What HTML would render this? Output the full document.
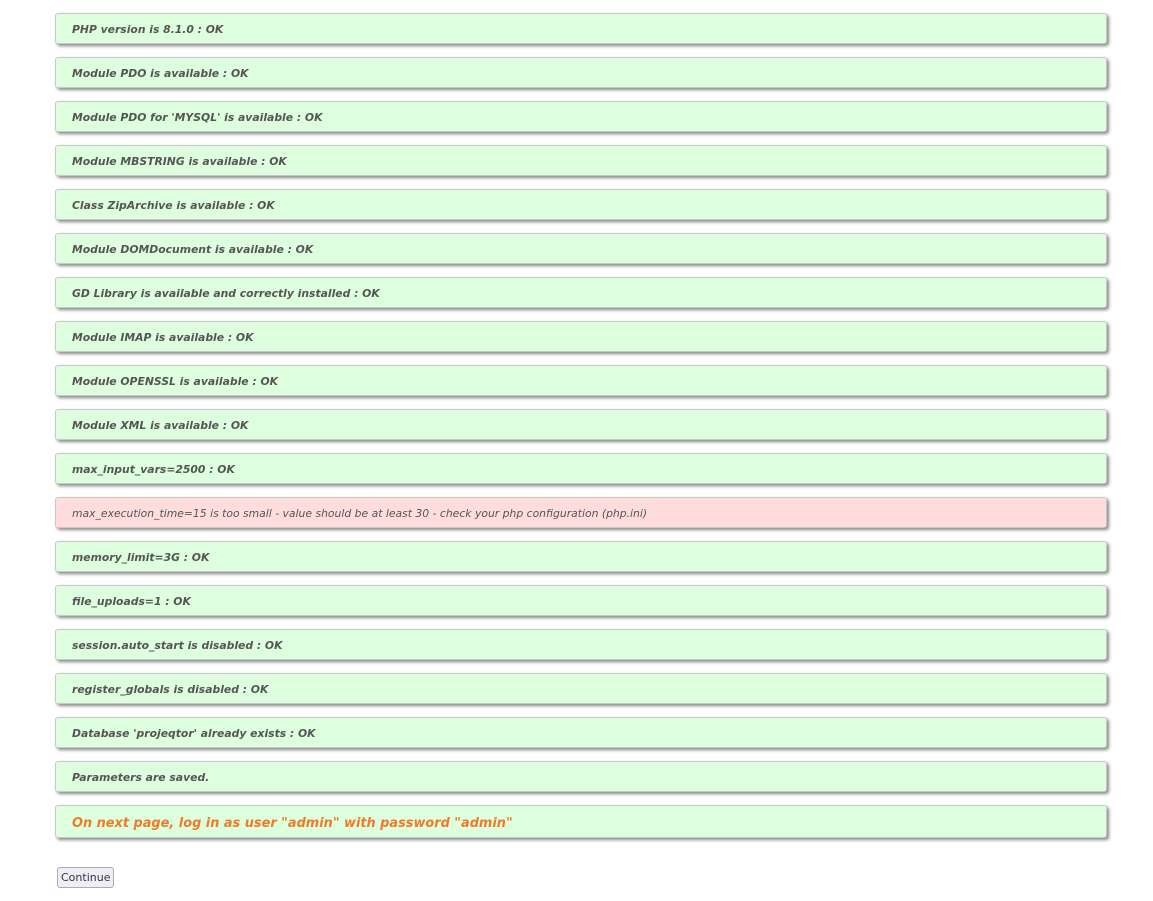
<!DOCTYPE html>
<html><head><meta charset="utf-8"><style>
body{margin:0;background:#fff;width:1153px;height:901px;overflow:hidden;font-family:"DejaVu Sans",Verdana,sans-serif;}
.b{position:absolute;left:55px;width:1050px;height:29px;border:1px solid #c8c8c8;border-radius:3px;background:#ddffdd;box-shadow:2px 2px 3px #888;box-sizing:content-box;}
.b span{position:absolute;left:16px;top:9px;font-size:10.8px;font-weight:bold;font-style:italic;color:#555;white-space:nowrap;}
.r{background:#ffdddd;}
.r span{font-weight:normal;}
.o span{color:#f07a2a;font-size:12.9px;top:10px;}
button{position:absolute;left:57px;top:867px;height:21px;padding:0 3px;font-family:"DejaVu Sans",sans-serif;font-size:11px;color:#334;background:#eeeef4;border:1px solid #aab;border-radius:3px;}
</style></head><body>
<div class="b" style="top:13px"><span>PHP version is 8.1.0 : OK</span></div>
<div class="b" style="top:57px"><span>Module PDO is available : OK</span></div>
<div class="b" style="top:101px"><span>Module PDO for 'MYSQL' is available : OK</span></div>
<div class="b" style="top:145px"><span>Module MBSTRING is available : OK</span></div>
<div class="b" style="top:189px"><span>Class ZipArchive is available : OK</span></div>
<div class="b" style="top:233px"><span>Module DOMDocument is available : OK</span></div>
<div class="b" style="top:277px"><span>GD Library is available and correctly installed : OK</span></div>
<div class="b" style="top:321px"><span>Module IMAP is available : OK</span></div>
<div class="b" style="top:365px"><span>Module OPENSSL is available : OK</span></div>
<div class="b" style="top:409px"><span>Module XML is available : OK</span></div>
<div class="b" style="top:453px"><span>max_input_vars=2500 : OK</span></div>
<div class="b r" style="top:497px"><span>max_execution_time=15 is too small - value should be at least 30 - check your php configuration (php.ini)</span></div>
<div class="b" style="top:541px"><span>memory_limit=3G : OK</span></div>
<div class="b" style="top:585px"><span>file_uploads=1 : OK</span></div>
<div class="b" style="top:629px"><span>session.auto_start is disabled : OK</span></div>
<div class="b" style="top:673px"><span>register_globals is disabled : OK</span></div>
<div class="b" style="top:717px"><span>Database 'projeqtor' already exists : OK</span></div>
<div class="b" style="top:761px"><span>Parameters are saved.</span></div>
<div class="b o" style="top:805px;height:31px"><span>On next page, log in as user "admin" with password "admin"</span></div>
<button>Continue</button>
</body></html>
